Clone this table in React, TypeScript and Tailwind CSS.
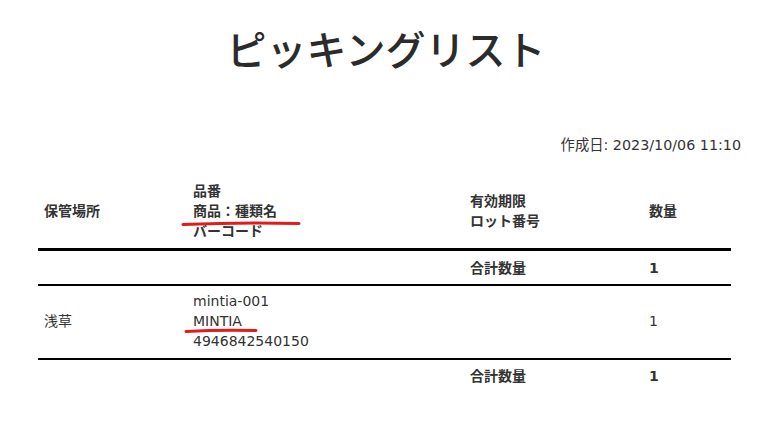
const FONT = "font-['DejaVu_Sans','Noto_Sans_CJK_JP',sans-serif]";

type Row = {
  place: string;
  item: string[];
  lot: string[];
  qty: string;
};

const ROWS: Row[] = [
  { place: "浅草", item: ["mintia-001", "MINTIA", "4946842540150"], lot: [], qty: "1" },
];

function TotalRow({ qty, last }: { qty: string; last?: boolean }) {
  return (
    <div
      className={
        last
          ? "grid grid-cols-[149px_277px_179px_88px] pt-[6px] leading-[20px] font-bold"
          : "grid grid-cols-[149px_277px_179px_88px] border-b-2 border-black pt-[7px] pb-[6px] leading-[20px] font-bold"
      }
    >
      <div />
      <div />
      <div className="px-[6px]">合計数量</div>
      <div className="px-[6px]">{qty}</div>
    </div>
  );
}

export default function App() {
  return (
    <div className={`relative h-[445px] w-[772px] bg-white text-[14px] text-[#333] ${FONT}`}>
      <h1 className="pt-[24px] text-center font-['Noto_Sans_CJK_JP',sans-serif] text-[40px] font-medium leading-[48px] text-[#2b2b2b]">
        ピッキングリスト
      </h1>
      <div className="mt-[63px] pr-[31px] text-right text-[14.3px] leading-[20px]">作成日: 2023/10/06 11:10</div>

      <div className="mx-[38px] mt-[18px] w-[693px]">
        {/* header */}
        <div className="grid grid-cols-[149px_277px_179px_88px] items-center border-b-[3px] border-black pt-[8px] pb-[7px] font-bold leading-[20px]">
          <div className="px-[6px]">保管場所</div>
          <div className="px-[6px]">
            <div>品番</div>
            <div>商品：種類名</div>
            <div>バーコード</div>
          </div>
          <div className="px-[6px]">
            <div>有効期限</div>
            <div>ロット番号</div>
          </div>
          <div className="px-[6px]">数量</div>
        </div>

        <TotalRow qty="1" />

        {ROWS.map((r) => (
          <div
            key={r.item[0]}
            className="grid grid-cols-[149px_277px_179px_88px] items-center border-b-2 border-black pt-[5px] pb-[7px] leading-[20px]"
          >
            <div className="px-[6px]">{r.place}</div>
            <div className="px-[6px]">
              {r.item.map((t) => (
                <div key={t}>{t}</div>
              ))}
            </div>
            <div className="px-[6px]">
              {r.lot.map((t) => (
                <div key={t}>{t}</div>
              ))}
            </div>
            <div className="px-[6px]">{r.qty}</div>
          </div>
        ))}

        <TotalRow qty="1" last />
      </div>

      {/* red hand-drawn underlines */}
      <svg className="pointer-events-none absolute left-0 top-0" width="772" height="445">
        <path d="M183 224.5 Q240 222 299 223.5" stroke="#e31b1b" strokeWidth="3" fill="none" strokeLinecap="round" />
        <path d="M186 331.5 Q220 329.5 256 330.5" stroke="#e31b1b" strokeWidth="3" fill="none" strokeLinecap="round" />
      </svg>
    </div>
  );
}
